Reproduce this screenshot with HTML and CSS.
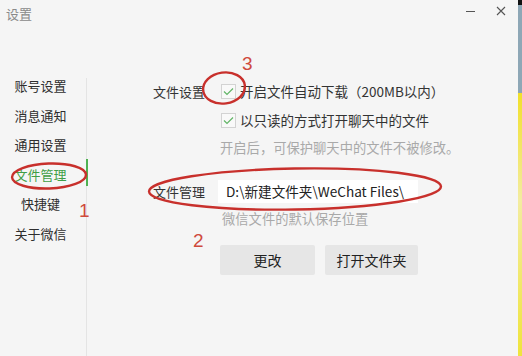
FILE: index.html
```html
<!DOCTYPE html>
<html lang="zh-CN">
<head>
<meta charset="utf-8">
<title>设置</title>
<link rel="stylesheet" href="styles.css">
</head>
<body>
<div class="screen">
  <div class="window">
    <div class="titlebar">
      <span class="title">设置</span>
      <div class="controls">
        <span class="ctl min"></span>
        <svg class="ctl close" width="10" height="10" viewBox="0 0 10 10"><path d="M1 1L9 9M9 1L1 9" stroke="#555" stroke-width="1.1" fill="none"/></svg>
      </div>
    </div>
    <div class="main">
      <nav class="sidebar">
        <span class="nav-item">账号设置</span>
        <span class="nav-item">消息通知</span>
        <span class="nav-item">通用设置</span>
        <span class="nav-item active">文件管理</span>
        <span class="nav-item">快捷键</span>
        <span class="nav-item">关于微信</span>
      </nav>
      <section class="content">
        <div class="row">
          <span class="label">文件设置</span>
          <label class="check">
            <span class="box"><svg width="11" height="9" viewBox="0 0 11 9"><path d="M1 4.5L4 7.5L10 1.5" stroke="#62b567" stroke-width="1.2" fill="none"/></svg></span>
            <span>开启文件自动下载（200MB以内）</span>
          </label>
        </div>
        <div class="row sub">
          <label class="check">
            <span class="box"><svg width="11" height="9" viewBox="0 0 11 9"><path d="M1 4.5L4 7.5L10 1.5" stroke="#62b567" stroke-width="1.2" fill="none"/></svg></span>
            <span>以只读的方式打开聊天中的文件</span>
          </label>
        </div>
        <p class="hint hint1">开启后，可保护聊天中的文件不被修改。</p>
        <div class="row path-row">
          <span class="label label2">文件管理</span>
          <div class="path">D:\新建文件夹\WeChat Files\</div>
        </div>
        <p class="hint hint2">微信文件的默认保存位置</p>
        <div class="buttons">
          <button class="btn btn1">更改</button>
          <button class="btn btn2">打开文件夹</button>
        </div>
      </section>
    </div>
  </div>
  <div class="desktop-edge"></div>
  <svg class="marks" width="522" height="356" viewBox="0 0 522 356">
    <ellipse cx="49" cy="176" rx="37" ry="12.5" transform="rotate(-2 49 176)" fill="none" stroke="#c8302c" stroke-width="2.4"/>
    <ellipse cx="224" cy="88" rx="21" ry="15.5" transform="rotate(-8 224 88)" fill="none" stroke="#c8302c" stroke-width="2.4"/>
    <ellipse cx="295" cy="189" rx="146" ry="20.5" transform="rotate(-1 295 189)" fill="none" stroke="#c8302c" stroke-width="2.4"/>
  </svg>
  <span class="num n1">1</span>
  <span class="num n2">2</span>
  <span class="num n3">3</span>
</div>
</body>
</html>
```
FILE: styles.css
```css
* { box-sizing: border-box; }
html, body { margin: 0; padding: 0; }
body {
  width: 522px;
  height: 356px;
  overflow: hidden;
  font-family: "Noto Sans CJK SC", "Noto Sans", sans-serif;
  color: #333;
}
.screen {
  position: relative;
  display: flex;
  width: 522px;
  height: 356px;
}
.window {
  width: 518px;
  height: 356px;
  background: #f5f5f5;
  display: flex;
  flex-direction: column;
}
.desktop-edge {
  width: 4px;
  height: 356px;
  background: linear-gradient(to bottom, #111 0, #111 5px, #8ea7b6 5px, #8ea7b6 93px, #f1e02a 93px, #f3eca0 200px, #efe43c 356px);
}
.titlebar {
  height: 26px;
  display: flex;
  align-items: center;
  justify-content: space-between;
  padding: 0 12px 0 6px;
}
.title {
  font-size: 13px;
  color: #8a8a8a;
  line-height: 15px;
}
.controls {
  display: flex;
  align-items: center;
  gap: 21px;
  margin-top: -4px;
}
.ctl.min {
  width: 9px;
  height: 1px;
  background: #555;
}
.main {
  display: flex;
  flex: 1;
  margin-top: 52px;
}
.sidebar {
  width: 87px;
  padding-right: 5px;
  border-right: 1px solid #e4e4e4;
  display: flex;
  flex-direction: column;
  align-items: center;
}
.nav-item {
  position: relative;
  font-size: 13px;
  line-height: 15px;
  margin-bottom: 14.5px;
  color: #2e2e2e;
}
.nav-item.active {
  color: #3f9e46;
}
.nav-item.active::after {
  content: "";
  position: absolute;
  right: -21px;
  top: -8px;
  width: 2px;
  height: 27px;
  background: #4fb152;
}
.content {
  padding: 6px 0 0 66px;
  display: flex;
  flex-direction: column;
  font-size: 13px;
  color: #333;
}
.row {
  display: flex;
  align-items: center;
}
.label {
  width: 68px;
  line-height: 15px;
  color: #333;
}
.check {
  display: flex;
  align-items: center;
  gap: 4px;
  line-height: 15px;
  font-size: 13.5px;
}
.box {
  width: 15px;
  height: 15px;
  border: 1px solid #d3d3d3;
  background: #f9f9f9;
  display: flex;
  align-items: center;
  justify-content: center;
}
.row.sub {
  margin-top: 14px;
  padding-left: 68px;
}
.hint {
  margin: 0;
  color: #a9a9a9;
  line-height: 15px;
  font-size: 13.3px;
}
.hint1 {
  margin-top: 11.5px;
  padding-left: 67px;
}
.path-row {
  margin-top: 25.5px;
}
.label2 {
  width: 65px;
}
.path {
  width: 200px;
  height: 23px;
  background: #fff;
  font-size: 13.6px;
  line-height: 23px;
  padding-left: 8px;
  color: #222;
  white-space: nowrap;
}
.hint2 {
  margin-top: 7.5px;
  padding-left: 69px;
}
.buttons {
  display: flex;
  gap: 10px;
  margin-top: 19.5px;
  padding-left: 67px;
}
.btn {
  height: 30px;
  border: none;
  border-radius: 2px;
  background: #e6e6e6;
  font-family: inherit;
  font-size: 14px;
  color: #222;
  padding: 0;
}
.btn1 { width: 95px; }
.btn2 { width: 93px; }
.marks {
  position: absolute;
  left: 0;
  top: 0;
  pointer-events: none;
}
.num {
  position: absolute;
  font-family: "Liberation Sans", sans-serif;
  font-size: 19px;
  line-height: 19px;
  color: #cf4a3c;
}
.n1 { left: 79px; top: 201px; }
.n2 { left: 193px; top: 231px; }
.n3 { left: 242px; top: 54px; }
```
